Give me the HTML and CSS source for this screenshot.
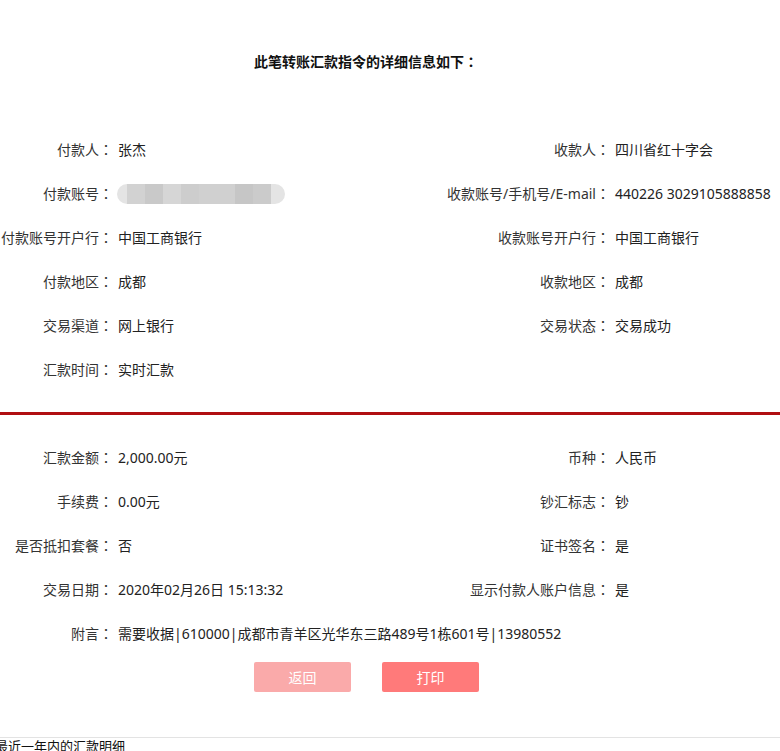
FILE: index.html
```html
<!DOCTYPE html>
<html lang="zh-CN">
<head>
<meta charset="utf-8">
<title>汇款详细信息</title>
<link rel="stylesheet" href="styles.css">
</head>
<body>
<div class="page">
  <h1 class="title">此笔转账汇款指令的详细信息如下<span class="colon">：</span></h1>

  <div class="grid grid-top">
    <div class="label">付款人<span class="colon">：</span></div><div class="value">张杰</div>
    <div class="label">收款人<span class="colon">：</span></div><div class="value">四川省红十字会</div>

    <div class="label">付款账号<span class="colon">：</span></div>
    <div class="value"><div class="blur"><span class="b1"></span><span class="b2"></span><span class="b3"></span><span class="b4"></span><span class="b5"></span><span class="b6"></span><span class="b7"></span><span class="b8"></span><span class="b9"></span></div></div>
    <div class="label">收款账号/手机号/E-mail<span class="colon">：</span></div><div class="value">440226 3029105888858</div>

    <div class="label">付款账号开户行<span class="colon">：</span></div><div class="value">中国工商银行</div>
    <div class="label">收款账号开户行<span class="colon">：</span></div><div class="value">中国工商银行</div>

    <div class="label">付款地区<span class="colon">：</span></div><div class="value">成都</div>
    <div class="label">收款地区<span class="colon">：</span></div><div class="value">成都</div>

    <div class="label">交易渠道<span class="colon">：</span></div><div class="value">网上银行</div>
    <div class="label">交易状态<span class="colon">：</span></div><div class="value">交易成功</div>

    <div class="label">汇款时间<span class="colon">：</span></div><div class="value">实时汇款</div>
    <div class="label"></div><div class="value"></div>
  </div>

  <div class="divider"></div>

  <div class="grid grid-bottom">
    <div class="label">汇款金额<span class="colon">：</span></div><div class="value">2,000.00元</div>
    <div class="label">币种<span class="colon">：</span></div><div class="value">人民币</div>

    <div class="label">手续费<span class="colon">：</span></div><div class="value">0.00元</div>
    <div class="label">钞汇标志<span class="colon">：</span></div><div class="value">钞</div>

    <div class="label">是否抵扣套餐<span class="colon">：</span></div><div class="value">否</div>
    <div class="label">证书签名<span class="colon">：</span></div><div class="value">是</div>

    <div class="label">交易日期<span class="colon">：</span></div><div class="value">2020年02月26日 15:13:32</div>
    <div class="label">显示付款人账户信息<span class="colon">：</span></div><div class="value">是</div>

    <div class="label">附言<span class="colon">：</span></div><div class="value span3">需要收据|610000|成都市青羊区光华东三路489号1栋601号|13980552</div>
  </div>

  <div class="actions">
    <button class="btn btn-back">返回</button>
    <button class="btn btn-print">打印</button>
  </div>

  <div class="footer">
    <div class="footer-text">最近一年内的汇款明细</div>
  </div>
</div>
</body>
</html>
```

FILE: styles.css
```css
html, body {
  margin: 0;
  padding: 0;
  background: #ffffff;
}

body {
  font-family: "Noto Sans", "Noto Sans CJK SC", sans-serif;
  font-size: 14px;
  color: #222222;
  overflow: hidden;
}

.page {
  width: 780px;
}

.title {
  margin: 52px 0 0 0;
  padding-left: 254px;
  font-size: 14px;
  line-height: 20px;
  font-weight: bold;
  color: #111111;
}

.colon {
  display: inline-block;
  width: 14px;
  line-height: 14px;
  text-align: center;
  vertical-align: baseline;
  font-family: "Noto Sans CJK JP", "Noto Sans CJK SC", sans-serif;
}

.grid {
  display: grid;
  grid-template-columns: 113px 277px 220px 1fr;
  grid-auto-rows: 44px;
}

.grid-top {
  margin-top: 56px;
}

.grid-bottom {
  margin-top: 21px;
}

.label {
  text-align: right;
  line-height: 44px;
  white-space: nowrap;
  color: #333333;
}

.value {
  padding-left: 5px;
  line-height: 44px;
  white-space: nowrap;
  color: #222222;
  display: flex;
  align-items: center;
}

.span3 {
  grid-column: span 3;
}

.blur {
  display: flex;
  width: 168px;
  height: 20px;
  border-radius: 10px;
  overflow: hidden;
  margin-left: -1px;
}

.blur span {
  display: block;
  height: 100%;
}

.b1 { width: 10px; background: #e4e4e4; }
.b2 { width: 18px; background: #d2d2d2; }
.b3 { width: 18px; background: #c9c9c9; }
.b4 { width: 18px; background: #d6d6d6; }
.b5 { width: 18px; background: #cdcdcd; }
.b6 { width: 36px; background: #d0d0d0; }
.b7 { width: 18px; background: #c6c6c6; }
.b8 { width: 18px; background: #cbcbcb; }
.b9 { flex: 1; background: #e4e4e4; }

.divider {
  margin-top: 20px;
  height: 3px;
  background: #b00f12;
}

.actions {
  margin-top: 6px;
  display: flex;
  gap: 31px;
  padding-left: 254px;
}

.btn {
  width: 97px;
  height: 30px;
  border: none;
  border-radius: 2px;
  color: #ffffff;
  font-family: "Noto Sans", "Noto Sans CJK SC", sans-serif;
  font-size: 14px;
  padding: 0;
}

.btn-back {
  background: #faaaaa;
}

.btn-print {
  background: #ff7a7a;
}

.footer {
  margin-top: 45px;
  border-top: 1px solid #e3e3e3;
}

.footer-text {
  margin-left: -5px;
  line-height: 16px;
  font-size: 13px;
  color: #111111;
}
```
